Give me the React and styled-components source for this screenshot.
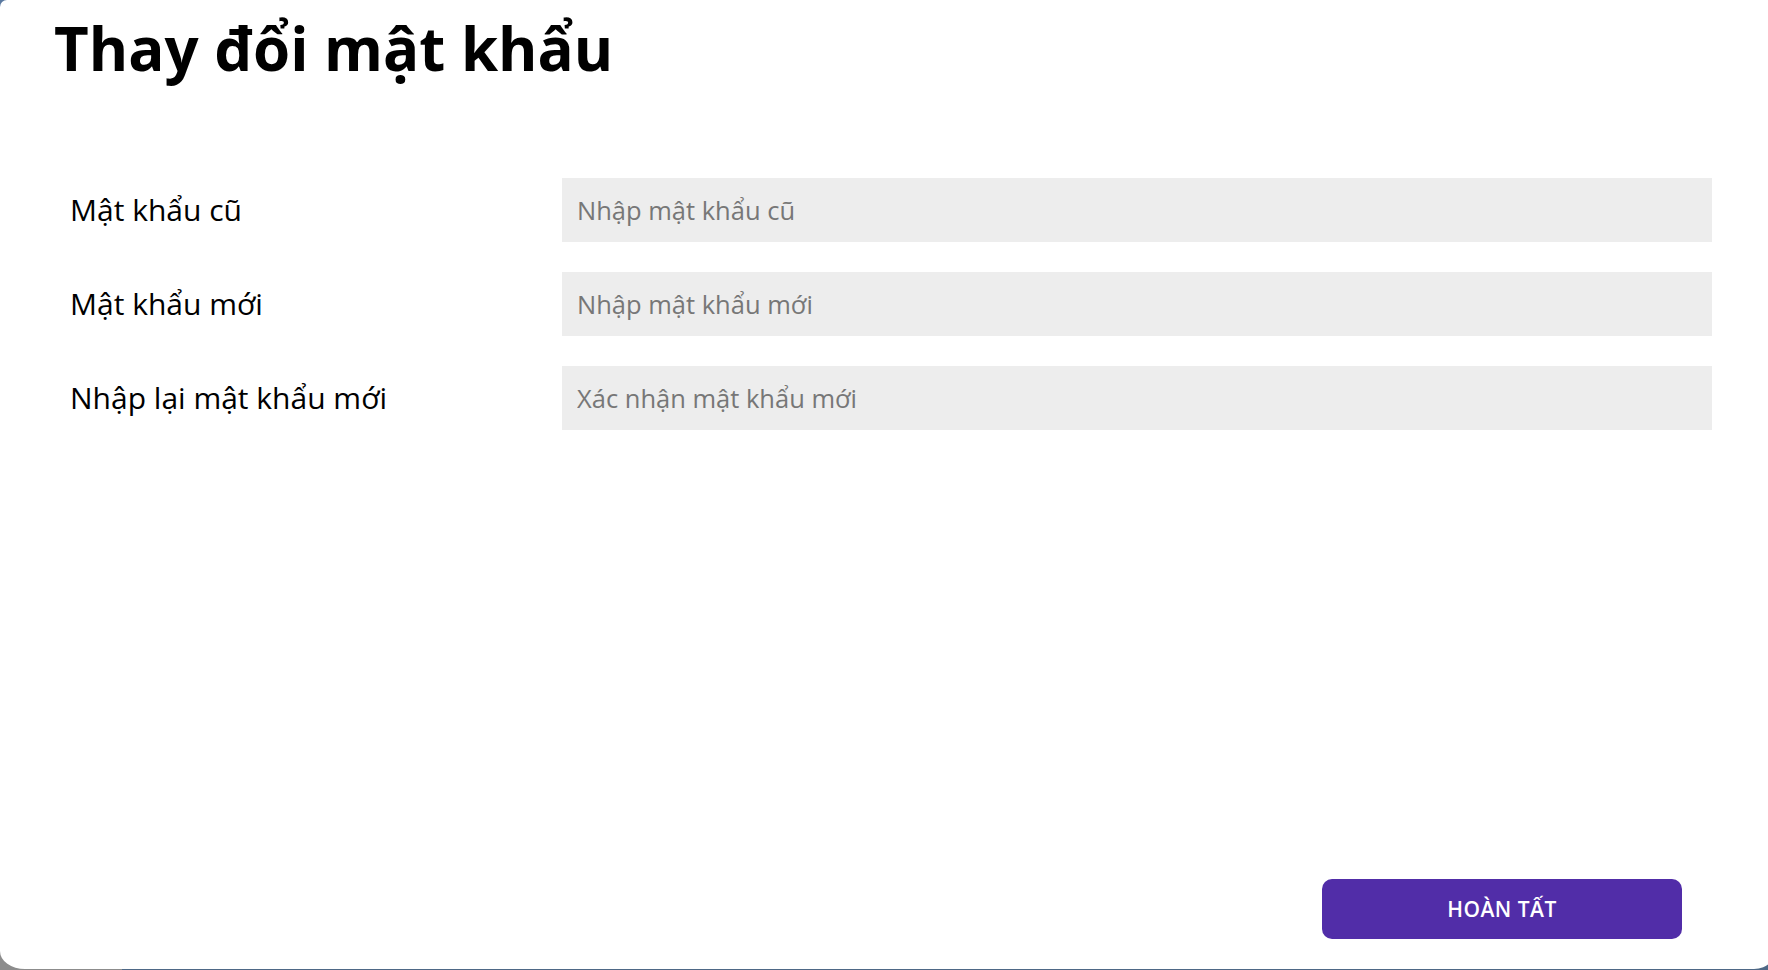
import React from "react";
import styled, { createGlobalStyle } from "styled-components";

const Global = createGlobalStyle`
  html, body {
    margin: 0;
    padding: 0;
    overflow: hidden;
  }
  body {
    font-family: "Open Sans", "Noto Sans", sans-serif;
  }
  * { box-sizing: border-box; }
`;

const Backdrop = styled.div`
  width: 100vw;
  height: 970px;
  overflow: hidden;
  background:
    linear-gradient(to bottom, #5a79a0 0 40%, transparent 40%),
    linear-gradient(to right, #8c8c8c 0 122px, #4e6886 122px);
`;

const Panel = styled.section`
  width: calc(100% + 10px);
  height: 969px;
  background: #ffffff;
  border-radius: 7px 0 24px 25px / 7px 0 24px 18px;
  display: flex;
  flex-direction: column;
  padding: 7px 96px 30px 54px;
`;

const Title = styled.h1`
  margin: 0;
  font-family: "Open Sans", "Noto Sans", sans-serif;
  font-weight: 700;
  font-size: 60px;
  line-height: normal;
  color: #000;
`;

const Form = styled.form`
  margin-top: 89px;
  padding-left: 16px;
  display: flex;
  flex-direction: column;
  gap: 30px;
  margin-right: -30px;
`;

const Row = styled.div`
  display: grid;
  grid-template-columns: 492px 1fr;
  align-items: center;
`;

const Label = styled.label`
  font-size: 30px;
  color: #000;
  line-height: 1.2;
`;

const Input = styled.input`
  height: 64px;
  width: 100%;
  border: none;
  outline: none;
  background: #ededed;
  padding: 0 15px;
  font-family: "Open Sans", "Noto Sans", sans-serif;
  font-size: 25.5px;
  color: #222;
  &::placeholder {
    color: #777;
  }
`;

const Footer = styled.div`
  margin-top: auto;
  display: flex;
  justify-content: flex-end;
`;

const Button = styled.button`
  width: 360px;
  height: 60px;
  border: none;
  border-radius: 10px;
  background: #512da8;
  color: #fff;
  font-family: "Open Sans", "Noto Sans", sans-serif;
  font-weight: 600;
  font-size: 21px;
  letter-spacing: 0.5px;
  cursor: pointer;
`;

const fields = [
  { id: "old", label: "Mật khẩu cũ", placeholder: "Nhập mật khẩu cũ" },
  { id: "new", label: "Mật khẩu mới", placeholder: "Nhập mật khẩu mới" },
  { id: "confirm", label: "Nhập lại mật khẩu mới", placeholder: "Xác nhận mật khẩu mới" },
];

export default function App() {
  return (
    <>
      <Global />
      <Backdrop>
        <Panel>
          <Title>Thay đổi mật khẩu</Title>
          <Form onSubmit={(e) => e.preventDefault()}>
            {fields.map((f) => (
              <Row key={f.id}>
                <Label htmlFor={f.id}>{f.label}</Label>
                <Input id={f.id} type="password" placeholder={f.placeholder} />
              </Row>
            ))}
          </Form>
          <Footer>
            <Button type="submit">HOÀN TẤT</Button>
          </Footer>
        </Panel>
      </Backdrop>
    </>
  );
}
